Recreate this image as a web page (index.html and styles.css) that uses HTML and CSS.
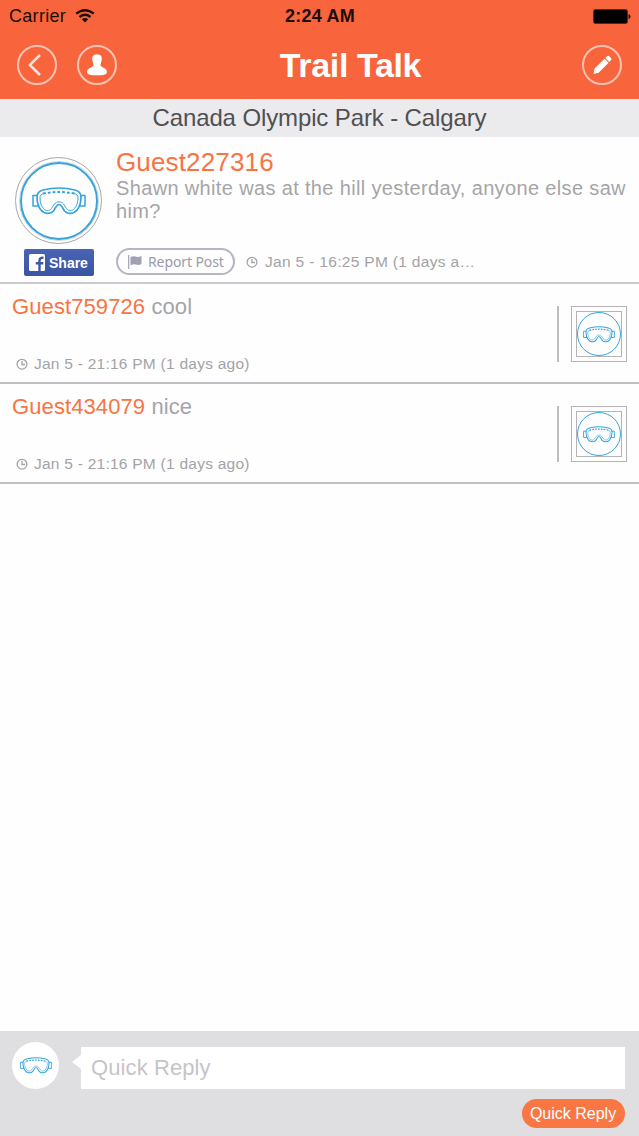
FILE: index.html
```html
<!DOCTYPE html>
<html lang="en">
  <head>
    <meta charset="UTF-8" />
    <meta name="viewport" content="width=device-width, initial-scale=1.0" />
    <title>Trail Talk</title>
    <link rel="stylesheet" href="styles.css">
  </head>
  <body>
    <!-- shared icons -->
    <svg class="icons">
      <symbol id="goggles" viewBox="0 0 54 28">
        <g fill="none" stroke="#35a4dc" stroke-linejoin="round" stroke-linecap="round">
          <path stroke-width="1.5" d="M5 8.5H1V19H6M49 8.5H53V19H48" />
          <path stroke-width="1.7" d="M11 3Q27 -1 43 3C47.5 4.2 49 6.500 49 10C49 16 47.5 20 45 23C42 27 35.500 27.500 32.500 24C30.500 21 29.500 17.500 27 17.500S23.500 21 21.500 24C18.500 27.500 12 27 9 23C6.500 20 5 16 5 10C5 6.500 6.500 4.200 11 3Z" />
          <path stroke-width="1" d="M12 6.500C9 7 8 8.500 8 11C8 16 9.500 19 11.500 21.500C13.500 24 17.500 24.300 19.500 21.500C21.500 18.500 23 14.800 27 14.800S32.500 18.500 34.500 21.500C36.500 24.300 40.500 24 42.500 21.500C44.500 19 46 16 46 11C46 8.500 45 7 42 6.500" />
          <path stroke-width="2" stroke-linecap="butt" stroke-dasharray="2.800 2" d="M11 6.600Q27 3.400 43 6.600" />
        </g>
      </symbol>
      <symbol id="clock" viewBox="0 0 12 12">
        <g fill="none" stroke="#a3a3aa" stroke-width="1.300">
          <circle cx="6" cy="6.200" r="4.900" />
          <path d="M6 3V6.500H9" />
        </g>
      </symbol>
    </svg>

    <div class="app">
      <header class="header">
        <div class="statusBar">
          <div class="carrier">
            <span>Carrier</span>
            <svg width="20" height="14" viewBox="0 0 20 14">
              <g fill="none" stroke="#1c0c08" stroke-width="2.300">
                <path d="M1.200 4.700Q10 -2.300 18.800 4.700" />
                <path d="M4.500 8Q10 3.600 15.500 8" />
              </g>
              <path fill="#1c0c08" d="M6.800 10.300Q10 7.800 13.200 10.300L10 13.500Z" />
            </svg>
          </div>
          <div class="time">2:24 AM</div>
          <div class="battery">
            <svg width="38" height="15" viewBox="0 0 38 15">
              <rect x=".5" y=".5" width="34" height="14" rx="2" fill="#000" stroke="#5e2415" />
              <path fill="#1c0c08" d="M35.500 5Q37.500 5.500 37.500 7.500T35.500 10Z" />
            </svg>
          </div>
        </div>
        <div class="navBar">
          <div class="navLeft">
            <a href="#" class="roundBtn">
              <svg width="36" height="36" viewBox="0 0 36 36">
                <path d="M21 8L10.800 18L21 28" fill="none" stroke="#ffe4db" stroke-width="2.500" />
              </svg>
            </a>
            <a href="#" class="roundBtn">
              <svg width="36" height="36" viewBox="0 0 36 36">
                <path fill="#fff" d="M18 7.500C22 7.500 23 9 22.700 12.500C22.400 15.500 21.500 16 21.500 18.500C22.500 20.500 28 21 28 25C28 27.500 25 28.300 18 28.300S8 27.500 8 25C8 21 13.500 20.500 14.500 18.500C14.500 16 13.600 15.500 13.300 12.500C13 9 14 7.500 18 7.500Z" />
              </svg>
            </a>
          </div>
          <h1>Trail Talk</h1>
          <div class="navRight">
            <a href="#" class="roundBtn">
              <svg width="36" height="36" viewBox="0 0 36 36">
                <path fill="#fff" d="M9.500 27L10.500 21.500L20.600 11.700L24.600 15.700L14.600 25.700ZM21.300 11L23.300 9Q24.200 8.300 25 9L27.200 11.200Q28 12 27.200 13L25.300 15Z" />
              </svg>
            </a>
          </div>
        </div>
      </header>

      <h2 class="location">Canada Olympic Park - Calgary</h2>

      <section class="post">
        <div class="postSide">
          <div class="avatar">
            <div class="avatarRing"><svg width="54" height="28"><use href="#goggles" /></svg></div>
          </div>
          <button class="share">
            <svg width="16" height="17" viewBox="0 0 16 17">
              <rect width="16" height="17" rx="1.500" fill="#fff" />
              <path fill="none" stroke="#3d58a6" stroke-width="2.400" d="M10.500 17V6.500Q10.500 3.500 14.500 3.700M6.800 9.200H14.300" />
            </svg>
            <span>Share</span>
          </button>
        </div>
        <div class="postBody">
          <div class="postName">Guest227316</div>
          <p class="postText">Shawn white was at the hill yesterday, anyone else saw him?</p>
          <div class="postMeta">
            <button class="report">
              <svg width="14" height="14" viewBox="0 0 14 14">
                <path d="M.7 0V14" stroke="#a0a2b3" stroke-width="1.200" />
                <path fill="#a0a2b3" d="M2.500 2Q5 .8 7.500 1.600T13.500 1V9Q10.500 10.500 8 9.500T2.500 10.500Z" />
              </svg>
              <span>Report Post</span>
            </button>
            <svg class="clock" width="12" height="12"><use href="#clock" /></svg>
            <span class="date">Jan 5 - 16:25 PM (1 days a…</span>
          </div>
        </div>
      </section>

      <section class="reply">
        <div class="replyBody">
          <div class="replyText"><b>Guest759726</b> cool</div>
          <div class="replyMeta">
            <svg class="clock" width="12" height="12"><use href="#clock" /></svg>
            <span class="date">Jan 5 - 21:16 PM (1 days ago)</span>
          </div>
        </div>
        <div class="thumbWrap">
          <div class="thumb">
            <div class="thumbInner"><div class="thumbRing"><svg width="32" height="17"><use href="#goggles" /></svg></div></div>
          </div>
        </div>
      </section>

      <section class="reply">
        <div class="replyBody">
          <div class="replyText"><b>Guest434079</b> nice</div>
          <div class="replyMeta">
            <svg class="clock" width="12" height="12"><use href="#clock" /></svg>
            <span class="date">Jan 5 - 21:16 PM (1 days ago)</span>
          </div>
        </div>
        <div class="thumbWrap">
          <div class="thumb">
            <div class="thumbInner"><div class="thumbRing"><svg width="32" height="17"><use href="#goggles" /></svg></div></div>
          </div>
        </div>
      </section>

      <form class="quickReply">
        <div class="replyRow">
          <div class="myAvatar"><svg width="32" height="17"><use href="#goggles" /></svg></div>
          <div class="bubble">
            <span class="arrow"></span>
            <input type="text" placeholder="Quick Reply" />
          </div>
        </div>
        <button type="button" class="sendBtn">Quick Reply</button>
      </form>
    </div>
  </body>
</html>
```
FILE: styles.css
```css
* {
  box-sizing: border-box;
}

body {
  margin: 0;
  font-family: "Liberation Sans", Arial, sans-serif;
  background-color: #fefefe;
}

button,
input {
  font-family: inherit;
  border: none;
  padding: 0;
}

svg {
  display: block;
  flex-shrink: 0;
}

.icons {
  display: none;
}

.app {
  display: flex;
  flex-direction: column;
  height: 1136px;
}

/* header */
.header {
  height: 99px;
  background-color: #f8643c;
  flex-shrink: 0;
}

.statusBar {
  display: grid;
  grid-template-columns: 1fr auto 1fr;
  align-items: center;
  height: 32px;
  padding: 0 8px 0 9px;
  font-size: 18px;
  color: #1c0c08;
}

.carrier {
  display: flex;
  align-items: center;
  gap: 9px;
  letter-spacing: 0.3px;
}

.time {
  font-weight: bold;
  font-size: 18px;
  letter-spacing: 0.2px;
}

.battery {
  justify-self: end;
}

.navBar {
  display: grid;
  grid-template-columns: 1fr auto 1fr;
  align-items: center;
  height: 66px;
  padding: 0 17px;
}

.navLeft {
  display: flex;
  gap: 20px;
}

.navRight {
  justify-self: end;
}

.roundBtn {
  display: flex;
  width: 40px;
  height: 40px;
  border: 2px solid #fdc3b1;
  border-radius: 50%;
}

.navBar h1 {
  margin: 0 0 0 62px;
  color: #fff;
  font-size: 34px;
  letter-spacing: -0.35px;
}

.location {
  height: 38px;
  margin: 0;
  background-color: #ebeaec;
  color: #505053;
  font-size: 24px;
  font-weight: normal;
  line-height: 38px;
  letter-spacing: -0.12px;
  text-align: center;
  flex-shrink: 0;
}

/* main post */
.post {
  display: flex;
  height: 147px;
  border-bottom: 2px solid #c9c9cd;
  flex-shrink: 0;
}

.postSide {
  width: 116px;
  padding: 20px 0 0 15px;
}

.avatar {
  display: flex;
  align-items: center;
  justify-content: center;
  width: 87px;
  height: 87px;
  border: 1px solid #a7a7aa;
  border-radius: 50%;
}

.avatarRing {
  display: flex;
  align-items: center;
  justify-content: center;
  width: 78px;
  height: 78px;
  border: 2px solid #35a4dc;
  border-radius: 50%;
  box-shadow: 0 0 0 1px #d6d6da;
}

.share {
  display: flex;
  align-items: center;
  gap: 4px;
  width: 70px;
  height: 27px;
  margin: 5px 0 0 9px;
  padding-left: 5px;
  border-radius: 2px;
  background: linear-gradient(#4864b4, #3a54a0);
  color: #fff;
  font-size: 14px;
  font-weight: bold;
}

.postBody {
  flex: 1;
  padding-top: 11px;
}

.postName {
  color: #f87443;
  font-size: 26px;
  line-height: 29px;
  letter-spacing: 0.15px;
}

.postText {
  height: 71px;
  margin: 0;
  color: #a5a5a8;
  font-size: 20px;
  line-height: 23px;
  letter-spacing: 0.35px;
}

.postMeta {
  display: flex;
  align-items: center;
}

.report {
  display: flex;
  align-items: center;
  gap: 6px;
  width: 119px;
  height: 27px;
  margin-right: 11px;
  padding-left: 10px;
  border: 2px solid #b4b6c0;
  border-radius: 14px;
  background: none;
  color: #9a9ba8;
  font-family: "Noto Sans", sans-serif;
  font-size: 14px;
  letter-spacing: -0.1px;
  white-space: nowrap;
}

.date {
  margin-left: 6px;
  color: #a3a3a6;
  font-size: 15.500px;
  letter-spacing: 0.25px;
}

.postMeta .date {
  margin-left: 7px;
  letter-spacing: 0.32px;
}

/* replies */
.reply {
  display: flex;
  justify-content: space-between;
  height: 100px;
  padding: 0 12px;
  border-bottom: 2px solid #c0c0c4;
  flex-shrink: 0;
}

.replyText {
  height: 71px;
  padding-top: 10px;
  color: #a5a5a8;
  font-size: 22px;
  letter-spacing: 0.1px;
}

.replyText b {
  color: #f87443;
  font-weight: normal;
}

.replyMeta {
  display: flex;
  align-items: center;
  padding-left: 4px;
}

.thumbWrap {
  height: 56px;
  margin-top: 22px;
  padding-left: 12px;
  border-left: 2px solid #bfbdc0;
}

.thumb {
  width: 56px;
  height: 56px;
  padding: 4px;
  border: 1px solid #b5b3b7;
}

.thumbInner {
  width: 46px;
  height: 46px;
  border: 1px solid #b5b3b7;
}

.thumbRing {
  display: flex;
  align-items: center;
  justify-content: center;
  width: 44px;
  height: 44px;
  border: 1px solid #35a4dc;
  border-radius: 50%;
}

/* reply form */
.quickReply {
  height: 105px;
  margin-top: auto;
  padding: 11px 14px 0 12px;
  background-color: #dfdee0;
}

.replyRow {
  display: flex;
}

.myAvatar {
  display: flex;
  align-items: center;
  justify-content: center;
  width: 47px;
  height: 47px;
  border-radius: 50%;
  background-color: #fff;
}

.bubble {
  display: flex;
  flex: 1;
  margin: 5px 0 0 13px;
}

.arrow {
  width: 9px;
  height: 14px;
  margin-top: 8px;
  background-color: #fff;
  clip-path: polygon(0 50%, 100% 0, 100% 100%);
}

.bubble input {
  flex: 1;
  height: 42px;
  padding: 0 10px;
  background-color: #fff;
  font-size: 22px;
  letter-spacing: 0.1px;
}

.bubble input::placeholder {
  color: #c5c4c8;
}

.sendBtn {
  display: block;
  width: 103px;
  height: 29px;
  margin: 10px 0 0 auto;
  padding-right: 1px;
  border-radius: 15px;
  background-color: #fa7744;
  color: #fff;
  font-size: 16px;
}
```
